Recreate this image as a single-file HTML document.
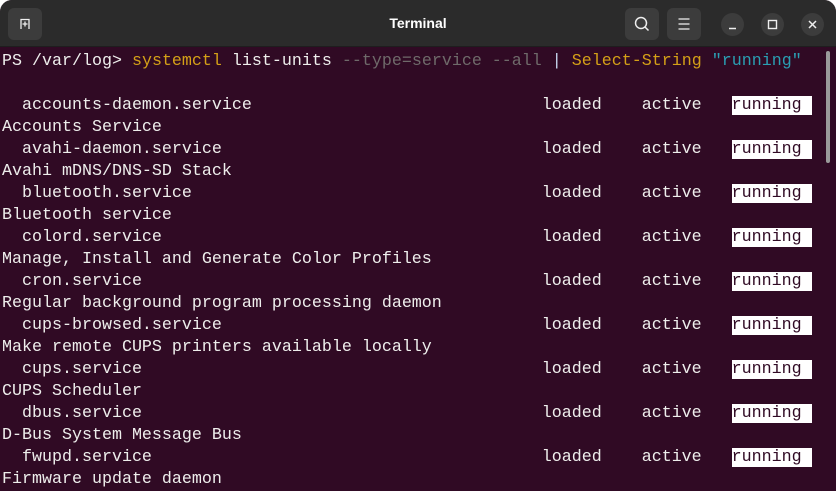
<!DOCTYPE html>
<html><head><style>
html,body{margin:0;padding:0;background:#fff;}
.win{position:absolute;left:0;top:0;width:836px;height:491px;border-radius:12px 12px 0 0;overflow:hidden;background:#300a24;}
.tb{position:absolute;left:0;top:0;width:836px;height:47px;background:#2b2b2b;border-bottom:1px solid #1e1e1e;box-sizing:border-box;}
.title{position:absolute;left:0;width:836px;top:15px;text-align:center;color:#fff;font:bold 14px "Liberation Sans",sans-serif;}
.btn{position:absolute;top:8px;width:34px;height:32px;background:#3c3c3c;border-radius:6px;}
.cb{position:absolute;top:13px;width:23px;height:23px;background:#3c3c3c;border-radius:50%;}
.term{position:absolute;left:2px;top:51px;font:16.67px/22px "Liberation Mono",monospace;color:#eeeeec;white-space:pre;}
.y{color:#d4a017}.g{color:#6f6a6a}.c{color:#2a9fb3}.p{color:#c8d8f0}
.r{background:#fff;color:#300a24;}
.sb{position:absolute;left:826px;top:51px;width:4px;height:112px;background:#9a9a9a;border-radius:2px;}
</style></head><body>
<div class="win">
<div class="tb">
<div class="btn" style="left:8px"><svg width="34" height="32"><path d="M13 21V11.5h8V21M17 13.5v5M14.5 16h5" stroke="#eee" stroke-width="1.3" fill="none"/></svg></div>
<div class="title">Terminal</div>
<div class="btn" style="left:625px"><svg width="34" height="32"><circle cx="16" cy="15" r="5.5" stroke="#eee" stroke-width="1.5" fill="none"/><path d="M20 19l3.5 3.5" stroke="#eee" stroke-width="1.5"/></svg></div>
<div class="btn" style="left:667px"><svg width="34" height="32"><path d="M11.5 11h11M11.5 16h11M11.5 21h11" stroke="#eee" stroke-width="1.3"/></svg></div>
<div class="cb" style="left:721px"><svg width="23" height="23"><path d="M8 15.5h7" stroke="#eee" stroke-width="1.5"/></svg></div>
<div class="cb" style="left:761px"><svg width="23" height="23"><rect x="7.5" y="7.5" width="8" height="8" stroke="#eee" stroke-width="1.4" fill="none"/></svg></div>
<div class="cb" style="left:801px"><svg width="23" height="23"><path d="M8 8l7 7M15 8l-7 7" stroke="#eee" stroke-width="1.5"/></svg></div>
</div>
<div class="term">PS /var/log> <span class="y">systemctl</span> list-units <span class="g">--type=service --all</span> <span class="p">|</span> <span class="y">Select-String</span> <span class="c">"running"</span>

  accounts-daemon.service                             loaded    active   <span class="r">running </span>
Accounts Service
  avahi-daemon.service                                loaded    active   <span class="r">running </span>
Avahi mDNS/DNS-SD Stack
  bluetooth.service                                   loaded    active   <span class="r">running </span>
Bluetooth service
  colord.service                                      loaded    active   <span class="r">running </span>
Manage, Install and Generate Color Profiles
  cron.service                                        loaded    active   <span class="r">running </span>
Regular background program processing daemon
  cups-browsed.service                                loaded    active   <span class="r">running </span>
Make remote CUPS printers available locally
  cups.service                                        loaded    active   <span class="r">running </span>
CUPS Scheduler
  dbus.service                                        loaded    active   <span class="r">running </span>
D-Bus System Message Bus
  fwupd.service                                       loaded    active   <span class="r">running </span>
Firmware update daemon</div>
<div class="sb"></div>
</div>
</body></html>
